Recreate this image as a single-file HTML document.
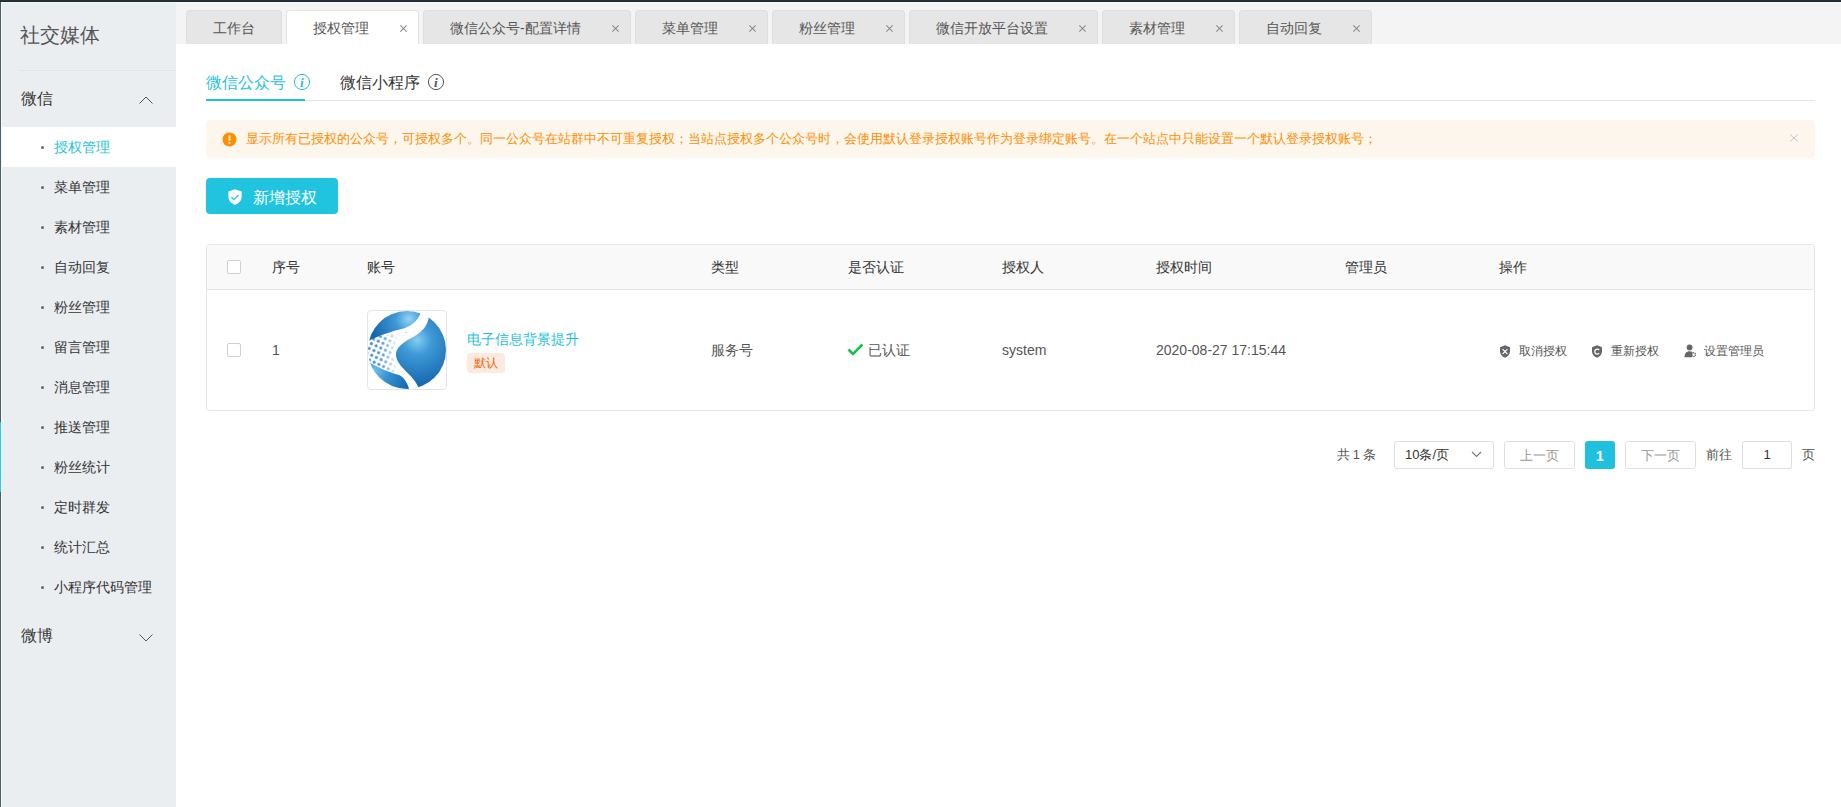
<!DOCTYPE html>
<html><head><meta charset="utf-8">
<style>
*{box-sizing:border-box;margin:0;padding:0}
html,body{width:1841px;height:807px;overflow:hidden;background:#fff;font-family:"Liberation Sans",sans-serif;color:#333}
.abs{position:absolute}
#topbar{left:0;top:0;width:1841px;height:2px;background:linear-gradient(#28343b 50%,#1b262d 50%)}
#leftbar{left:0;top:2px;width:1px;height:805px;background:#4a5f6b}
#cyan{left:0;top:422px;width:1px;height:70px;background:#1fd0ea}
#wline{left:1px;top:2px;width:1840px;height:1px;background:#f8f9fa}
#wlinev{left:1px;top:2px;width:1px;height:805px;background:#f8f9fa}
#side{left:2px;top:3px;width:174px;height:804px;background:#eaeef1}
#tabbar{left:176px;top:3px;width:1665px;height:41px;background:#f4f4f4}
.tab{position:absolute;top:10px;height:34px;background:#e6e6e6;border:1px solid #dedede;border-bottom:none;border-radius:4px 4px 0 0;font-size:14px;color:#555;line-height:33px}
.tab.on{background:#fff;border-color:#e2e2e2}
.tab span{position:absolute;left:26px;top:1px;white-space:nowrap}
.tab i{position:absolute;top:13px;width:8px;height:8px}
.side-item{position:absolute;left:2px;width:174px;height:40px;font-size:14px;line-height:40px;color:#333}
.side-item.on{background:#fff;color:#1fbfdc}
.side-item b{position:absolute;left:39px;top:19px;width:3px;height:3px;border-radius:50%;background:#666}
.side-item span{position:absolute;left:52px;top:0}

.cb{width:14px;height:14px;border:1px solid #d0d0d0;border-radius:2px;background:#fff}
.th{top:257px;font-size:14px;line-height:20px;color:#333;white-space:nowrap}
.td{top:340px;font-size:14px;line-height:20px;color:#555;white-space:nowrap}
.op{top:342px;font-size:12px;line-height:18px;color:#555;white-space:nowrap}
.pg{font-size:13px;line-height:18px;white-space:nowrap}
.tab i:before,.tab i:after{content:"";position:absolute;left:-1px;top:3.5px;width:9px;height:1px;background:#888;transform:rotate(45deg)}
.tab i:after{transform:rotate(-45deg)}
</style></head><body>
<div class="abs" id="side"></div>
<div class="abs" id="tabbar"></div>
<div class="abs" id="topbar"></div>
<div class="abs" id="wline"></div>
<div class="abs" id="wlinev"></div>
<div class="abs" id="leftbar"></div>
<div class="abs" id="cyan"></div>

<!-- sidebar -->
<div class="abs" style="left:20px;top:22px;font-size:20px;line-height:26px;color:#555">社交媒体</div>
<div class="abs" style="left:20px;top:70px;width:156px;height:1px;background:#dde2e6"></div>
<div class="abs" style="left:21px;top:88px;font-size:16px;line-height:22px;color:#333">微信</div>
<svg class="abs" style="left:138px;top:95px" width="16" height="10" viewBox="0 0 16 10"><path d="M1.5 8.5 L8 2 L14.5 8.5" fill="none" stroke="#4a5866" stroke-width="1"/></svg>
<div class="side-item on" style="top:127px"><b style="background:#666"></b><span>授权管理</span></div>
<div class="side-item" style="top:167px"><b></b><span>菜单管理</span></div>
<div class="side-item" style="top:207px"><b></b><span>素材管理</span></div>
<div class="side-item" style="top:247px"><b></b><span>自动回复</span></div>
<div class="side-item" style="top:287px"><b></b><span>粉丝管理</span></div>
<div class="side-item" style="top:327px"><b></b><span>留言管理</span></div>
<div class="side-item" style="top:367px"><b></b><span>消息管理</span></div>
<div class="side-item" style="top:407px"><b></b><span>推送管理</span></div>
<div class="side-item" style="top:447px"><b></b><span>粉丝统计</span></div>
<div class="side-item" style="top:487px"><b></b><span>定时群发</span></div>
<div class="side-item" style="top:527px"><b></b><span>统计汇总</span></div>
<div class="side-item" style="top:567px"><b></b><span>小程序代码管理</span></div>
<div class="abs" style="left:21px;top:625px;font-size:16px;line-height:22px;color:#333">微博</div>
<svg class="abs" style="left:138px;top:633px" width="16" height="10" viewBox="0 0 16 10"><path d="M1.5 1.5 L8 8 L14.5 1.5" fill="none" stroke="#4a5866" stroke-width="1"/></svg>

<!-- tabs -->
<div class="tab" style="left:186px;width:96px"><span>工作台</span></div>
<div class="tab on" style="left:286px;width:133px"><span>授权管理</span><i style="left:113px"></i></div>
<div class="tab" style="left:423px;width:208px"><span>微信公众号-配置详情</span><i style="left:188px"></i></div>
<div class="tab" style="left:635px;width:133px"><span>菜单管理</span><i style="left:113px"></i></div>
<div class="tab" style="left:772px;width:133px"><span>粉丝管理</span><i style="left:113px"></i></div>
<div class="tab" style="left:909px;width:189px"><span>微信开放平台设置</span><i style="left:169px"></i></div>
<div class="tab" style="left:1102px;width:133px"><span>素材管理</span><i style="left:113px"></i></div>
<div class="tab" style="left:1239px;width:133px"><span>自动回复</span><i style="left:113px"></i></div>


<!-- content tabs -->
<div class="abs" style="left:206px;top:72px;font-size:16px;line-height:22px;color:#1fbfdc;white-space:nowrap">微信公众号</div>
<svg class="abs" style="left:293px;top:73px" width="18" height="18" viewBox="0 0 18 18"><circle cx="9" cy="9" r="7.6" fill="none" stroke="#1fbfdc" stroke-width="1"/><text x="9" y="13.6" text-anchor="middle" font-family="Liberation Serif" font-style="italic" font-weight="bold" font-size="13.5" fill="#1fbfdc">i</text></svg>
<div class="abs" style="left:340px;top:72px;font-size:16px;line-height:22px;color:#333;white-space:nowrap">微信小程序</div>
<svg class="abs" style="left:427px;top:73px" width="18" height="18" viewBox="0 0 18 18"><circle cx="9" cy="9" r="7.6" fill="none" stroke="#555" stroke-width="1"/><text x="9" y="13.6" text-anchor="middle" font-family="Liberation Serif" font-style="italic" font-weight="bold" font-size="13.5" fill="#555">i</text></svg>
<div class="abs" style="left:206px;top:100px;width:1609px;height:1px;background:#e5e5e5"></div>
<div class="abs" style="left:206px;top:99px;width:99px;height:2px;background:#1fbfdc"></div>

<!-- alert -->
<div class="abs" style="left:206px;top:120px;width:1609px;height:38px;background:#fdf6ec;border-radius:4px"></div>
<svg class="abs" style="left:222px;top:132px" width="15" height="15" viewBox="0 0 15 15"><circle cx="7.5" cy="7.5" r="7" fill="#ff8f00"/><rect x="6.6" y="3.2" width="1.8" height="5.6" rx="0.6" fill="#fff"/><rect x="6.6" y="10" width="1.8" height="1.8" rx="0.5" fill="#fff"/></svg>
<div class="abs" style="left:246px;top:130px;font-size:13px;line-height:18px;color:#ff8d00;white-space:nowrap">显示所有已授权的公众号，可授权多个。同一公众号在站群中不可重复授权；当站点授权多个公众号时，会使用默认登录授权账号作为登录绑定账号。在一个站点中只能设置一个默认登录授权账号；</div>
<svg class="abs" style="left:1789px;top:133px" width="10" height="10" viewBox="0 0 10 10"><path d="M1.2 1.5 L8.8 8.5 M8.8 1.5 L1.2 8.5" stroke="#bcc6d2" stroke-width="1"/></svg>

<!-- button -->
<div class="abs" style="left:206px;top:178px;width:132px;height:36px;background:#21c4df;border-radius:4px"></div>
<svg class="abs" style="left:228px;top:189px" width="14" height="16" viewBox="0 0 14 16"><path d="M7 0.3 L13.6 2.6 L13.6 8 C13.6 11.6 10.8 14.6 7 15.8 C3.2 14.6 0.4 11.6 0.4 8 L0.4 2.6 Z" fill="#fff"/><path d="M3.4 8 L6 10.6 L10.6 6" fill="none" stroke="#21c4df" stroke-width="1.3"/></svg>
<div class="abs" style="left:253px;top:187px;font-size:16px;line-height:22px;color:#fff;white-space:nowrap">新增授权</div>

<!-- table -->
<div class="abs" style="left:206px;top:244px;width:1609px;height:167px;border:1px solid #e6e6e6;border-radius:3px;overflow:hidden">
  <div class="abs" style="left:0;top:0;width:1607px;height:45px;background:#f9f9f9;border-bottom:1px solid #e6e6e6"></div>
</div>
<div class="abs cb" style="left:227px;top:260px"></div>
<div class="abs th" style="left:272px">序号</div>
<div class="abs th" style="left:367px">账号</div>
<div class="abs th" style="left:711px">类型</div>
<div class="abs th" style="left:848px">是否认证</div>
<div class="abs th" style="left:1002px">授权人</div>
<div class="abs th" style="left:1156px">授权时间</div>
<div class="abs th" style="left:1345px">管理员</div>
<div class="abs th" style="left:1499px">操作</div>

<div class="abs cb" style="left:227px;top:343px"></div>
<div class="abs td" style="left:272px">1</div>
<div class="abs" style="left:367px;top:310px;width:80px;height:80px;border:1px solid #e4e4e4;border-radius:4px;background:#fff;overflow:hidden">
<svg width="80" height="80" viewBox="0 0 80 80" style="position:absolute;left:-1px;top:-1px">
<defs>
<radialGradient id="gR" gradientUnits="userSpaceOnUse" cx="50" cy="30" r="48"><stop offset="0" stop-color="#86cdf1"/><stop offset="0.3" stop-color="#3f9ad6"/><stop offset="1" stop-color="#1263ab"/></radialGradient>
<radialGradient id="gU" gradientUnits="userSpaceOnUse" cx="42" cy="9" r="38"><stop offset="0" stop-color="#93d4f3"/><stop offset="0.35" stop-color="#3f9ad6"/><stop offset="1" stop-color="#1466ae"/></radialGradient>
<radialGradient id="gL" gradientUnits="userSpaceOnUse" cx="8" cy="60" r="38"><stop offset="0" stop-color="#6ebdea"/><stop offset="0.4" stop-color="#3490cf"/><stop offset="1" stop-color="#1466ae"/></radialGradient>
<pattern id="dots" width="5.2" height="5.2" patternUnits="userSpaceOnUse" patternTransform="rotate(25)"><circle cx="2.6" cy="2.6" r="1.6" fill="#3388cb"/></pattern>
<linearGradient id="fade" gradientUnits="userSpaceOnUse" x1="0" y1="0" x2="30" y2="0"><stop offset="0" stop-color="#fff" stop-opacity="0"/><stop offset="0.5" stop-color="#fff" stop-opacity="0.15"/><stop offset="1" stop-color="#fff" stop-opacity="0.95"/></linearGradient>
<clipPath id="cc"><circle cx="40" cy="40" r="39"/></clipPath>
</defs>
<g clip-path="url(#cc)">
<rect x="0" y="0" width="80" height="80" fill="#fff"/>
<path d="M-2 28 C8 24 20 22 30 20 C40 17 46 14 50 4 L-2 4 L-2 60 C10 62 22 63 30 66 L38 66 C30 58 24 48 26 40 C28 32 38 26 42 22 Z" fill="url(#dots)"/>
<rect x="-2" y="0" width="40" height="80" fill="url(#fade)"/>
<path d="M-2 33 C8 27 22 22 38 18 C48 14 53 8 55 -2 L-2 -2 Z" fill="url(#gU)"/>
<path d="M-2 49 C8 57 22 62 32 65 C38 68 41 74 43 82 L-2 82 Z" fill="url(#gL)"/>
<path d="M62 6 C61 15 56 21 48 26 C36 32 28 38 29 46 C30 55 42 63 47 70 C50 74 52 78 53 82 L90 82 L90 -2 L64 -2 Z" fill="url(#gR)"/>
</g>
</svg>
</div>
<div class="abs" style="left:467px;top:329px;font-size:14px;line-height:20px;color:#1fbfdc;white-space:nowrap">电子信息背景提升</div>
<div class="abs" style="left:467px;top:353px;width:38px;height:20px;background:#fbeadf;border-radius:4px;font-size:12px;line-height:20px;color:#f5620c;text-align:center">默认</div>
<div class="abs td" style="left:711px">服务号</div>
<svg class="abs" style="left:847px;top:343px" width="17" height="13" viewBox="0 0 17 13"><path d="M1.5 6.5 L6 11 L15.5 1.5" fill="none" stroke="#15c04f" stroke-width="2.6"/></svg>
<div class="abs td" style="left:868px">已认证</div>
<div class="abs td" style="left:1002px">system</div>
<div class="abs td" style="left:1156px">2020-08-27 17:15:44</div>
<div class="abs op" style="left:1519px">取消授权</div>
<div class="abs op" style="left:1611px">重新授权</div>
<div class="abs op" style="left:1704px">设置管理员</div>
<svg class="abs" style="left:1499px;top:345px" width="12" height="13" viewBox="0 0 12 13"><path d="M6 0.3 L11 2.2 L11 6.6 C11 9.6 8.8 11.8 6 12.7 C3.2 11.8 1 9.6 1 6.6 L1 2.2 Z" fill="#666"/><path d="M3.6 4.2 L8.4 9 M8.4 4.2 L3.6 9" stroke="#fff" stroke-width="1.1"/></svg>
<svg class="abs" style="left:1591px;top:345px" width="12" height="13" viewBox="0 0 12 13"><path d="M6 0.3 L11 2.2 L11 6.6 C11 9.6 8.8 11.8 6 12.7 C3.2 11.8 1 9.6 1 6.6 L1 2.2 Z" fill="#666"/><path d="M8.2 5 A2.5 2.5 0 1 0 8.2 8.2" fill="none" stroke="#fff" stroke-width="1.3"/></svg>
<svg class="abs" style="left:1684px;top:344px" width="13" height="14" viewBox="0 0 13 14"><circle cx="5.6" cy="3.4" r="2.9" fill="#666"/><path d="M0.5 13.2 C0.5 9.2 2.6 7.2 5.6 7.2 C6.8 7.2 7.8 7.5 8.4 8 L8 13.2 Z" fill="#666"/><circle cx="9.6" cy="10.6" r="1.9" fill="none" stroke="#666" stroke-width="1.3" stroke-dasharray="1.2 0.6"/></svg>

<!-- pagination -->
<div class="abs pg" style="left:1337px;top:446px;color:#555;word-spacing:-0.8px">共 1 条</div>
<div class="abs" style="left:1394px;top:441px;width:100px;height:28px;border:1px solid #dedede;border-radius:3px"></div>
<div class="abs pg" style="left:1405px;top:446px;color:#333">10条/页</div>
<svg class="abs" style="left:1471px;top:451px" width="11" height="7" viewBox="0 0 11 7"><path d="M1 1 L5.5 5.5 L10 1" fill="none" stroke="#777" stroke-width="1.1"/></svg>
<div class="abs" style="left:1504px;top:441px;width:71px;height:28px;border:1px solid #dedede;border-radius:3px;font-size:13px;line-height:28px;text-align:center;color:#999">上一页</div>
<div class="abs" style="left:1585px;top:441px;width:30px;height:28px;background:#1fc1de;border-radius:3px;font-size:14px;font-weight:bold;line-height:30px;text-align:center;color:#fff">1</div>
<div class="abs" style="left:1625px;top:441px;width:71px;height:28px;border:1px solid #dedede;border-radius:3px;font-size:13px;line-height:28px;text-align:center;color:#999">下一页</div>
<div class="abs pg" style="left:1706px;top:446px;color:#555">前往</div>
<div class="abs" style="left:1742px;top:441px;width:50px;height:28px;border:1px solid #dedede;border-radius:2px;font-size:13px;line-height:26px;text-align:center;color:#333">1</div>
<div class="abs pg" style="left:1802px;top:446px;color:#555">页</div>
</body></html>
